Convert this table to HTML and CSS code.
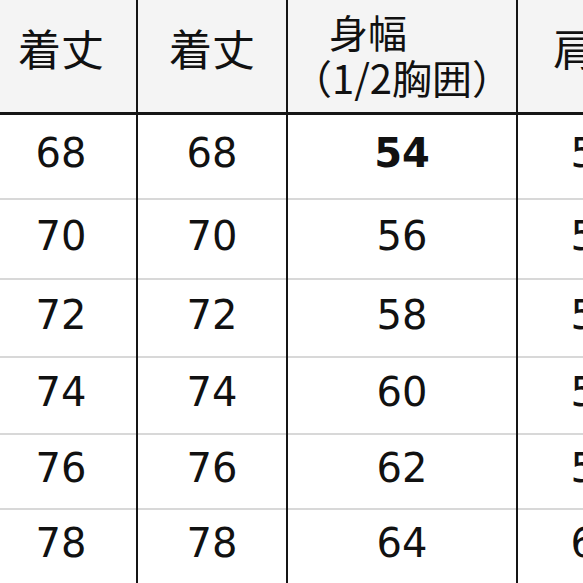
FILE: index.html
```html
<!DOCTYPE html>
<html lang="ja">
<head>
<meta charset="utf-8">
<title>サイズ表</title>
<link rel="stylesheet" href="styles.css">
</head>
<body>
<table class="size">
  <colgroup>
    <col class="c1"><col class="c2"><col class="c3"><col class="c4">
  </colgroup>
  <thead>
    <tr>
      <th>着丈</th>
      <th>着丈</th>
      <th class="two"><span class="l1">身幅</span><span class="l2">（1/2胸囲）</span></th>
      <th>肩幅</th>
    </tr>
  </thead>
  <tbody>
    <tr><td>68</td><td>68</td><td class="b">54</td><td>50</td></tr>
    <tr><td>70</td><td>70</td><td>56</td><td>52</td></tr>
    <tr><td>72</td><td>72</td><td>58</td><td>54</td></tr>
    <tr><td>74</td><td>74</td><td>60</td><td>56</td></tr>
    <tr><td>76</td><td>76</td><td>62</td><td>58</td></tr>
    <tr><td>78</td><td>78</td><td>64</td><td>60</td></tr>
  </tbody>
</table>
</body>
</html>
```
FILE: styles.css
```css
html, body {
  margin: 0;
  padding: 0;
  background: #ffffff;
  overflow: hidden;
}
body {
  width: 583px;
  height: 583px;
}
.size {
  border-collapse: collapse;
  table-layout: fixed;
  width: 688px;
  margin-left: -14px;
  color: #111111;
}
.c1 { width: 151px; }
.c2 { width: 150px; }
.c3 { width: 230px; }
.c4 { width: 157px; }

.size th {
  height: 94px;
  padding: 0 0 18px 0;
  background: #f4f4f4;
  font-family: "Noto Sans CJK JP", sans-serif;
  font-weight: 400;
  font-size: 43px;
  line-height: 1;
  text-align: center;
  vertical-align: middle;
  border-bottom: 3px solid #151515;
  border-left: 2px solid #151515;
}
.size th.two {
  height: 108px;
  padding: 0 0 4px 0;
}
.l1, .l2 {
  display: block;
}
.l1 {
  font-size: 39px;
  line-height: 46px;
  padding-right: 68px;
}
.l2 {
  font-size: 40px;
  line-height: 46px;
}
.size td {
  font-family: "DejaVu Sans", sans-serif;
  font-size: 40px;
  line-height: 1;
  text-align: center;
  vertical-align: middle;
  padding: 0 0 7px 0;
  border-left: 2px solid #151515;
  border-top: 2px solid #d8d8d8;
}
.size tr > :first-child {
  border-left: none;
}
.size td.b {
  font-weight: bold;
}
.size tbody tr:nth-child(1) td { height: 76px; border-top: none; }
.size tbody tr:nth-child(2) td { height: 71px; }
.size tbody tr:nth-child(3) td { height: 69px; }
.size tbody tr:nth-child(4) td { height: 68px; }
.size tbody tr:nth-child(5) td { height: 66px; }
.size tbody tr:nth-child(6) td { height: 66px; }
```
